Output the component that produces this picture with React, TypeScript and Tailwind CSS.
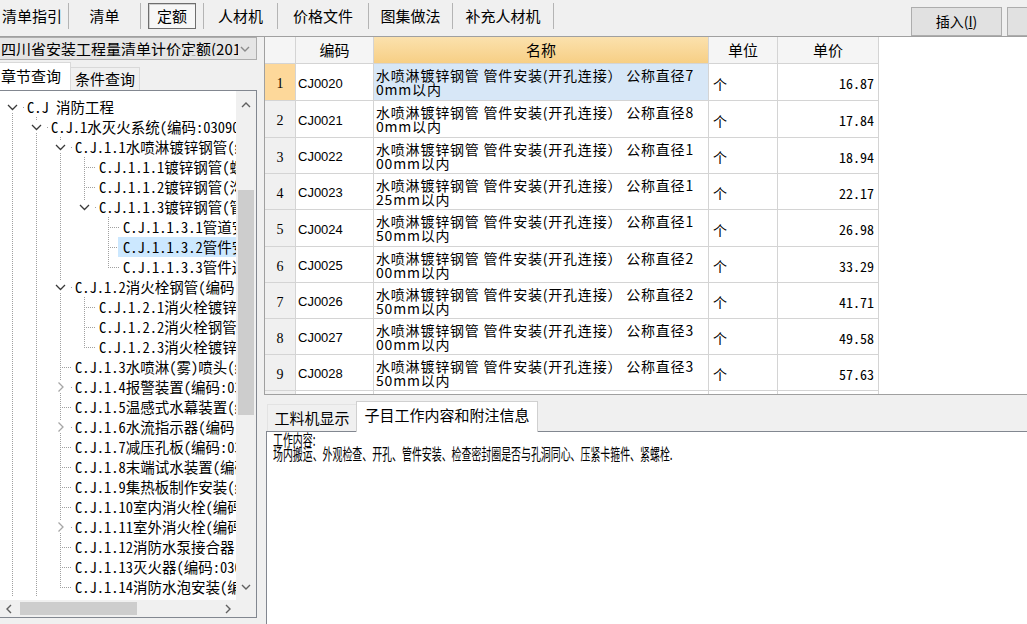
import React from "react";

const MONO = "font-['Noto_Sans_Mono_CJK_SC','Noto_Sans_CJK_SC',monospace]";

type TreeRow = { l: number; t: string; k: "o" | "c" | "f"; last?: boolean; g: boolean[]; sel?: boolean };

const G1 = [true];
const G2 = [true, true];
const G3 = [true, true, true];
const G4 = [true, true, true, false];

const tree: TreeRow[] = [
  { l: 0, t: "C.J 消防工程", k: "o", g: [] },
  { l: 1, t: "C.J.1水灭火系统(编码:030901)", k: "o", g: G1 },
  { l: 2, t: "C.J.1.1水喷淋镀锌钢管(编码", k: "o", g: G2 },
  { l: 3, t: "C.J.1.1.1镀锌钢管(螺纹连接)", k: "f", g: G3 },
  { l: 3, t: "C.J.1.1.2镀锌钢管(沟槽连接)", k: "f", g: G3 },
  { l: 3, t: "C.J.1.1.3镀锌钢管(管件)", k: "o", g: G3, last: true },
  { l: 4, t: "C.J.1.1.3.1管道安装", k: "f", g: G4 },
  { l: 4, t: "C.J.1.1.3.2管件安装", k: "f", g: G4, sel: true },
  { l: 4, t: "C.J.1.1.3.3管件连接", k: "f", g: G4, last: true },
  { l: 2, t: "C.J.1.2消火栓钢管(编码", k: "o", g: G2 },
  { l: 3, t: "C.J.1.2.1消火栓镀锌钢管", k: "f", g: G3 },
  { l: 3, t: "C.J.1.2.2消火栓钢管安装", k: "f", g: G3 },
  { l: 3, t: "C.J.1.2.3消火栓镀锌钢管", k: "f", g: G3, last: true },
  { l: 2, t: "C.J.1.3水喷淋(雾)喷头(编码", k: "f", g: G2 },
  { l: 2, t: "C.J.1.4报警装置(编码:030", k: "c", g: G2 },
  { l: 2, t: "C.J.1.5温感式水幕装置(编", k: "f", g: G2 },
  { l: 2, t: "C.J.1.6水流指示器(编码:", k: "c", g: G2 },
  { l: 2, t: "C.J.1.7减压孔板(编码:030", k: "f", g: G2 },
  { l: 2, t: "C.J.1.8末端试水装置(编码", k: "f", g: G2 },
  { l: 2, t: "C.J.1.9集热板制作安装(编", k: "f", g: G2 },
  { l: 2, t: "C.J.1.10室内消火栓(编码", k: "f", g: G2 },
  { l: 2, t: "C.J.1.11室外消火栓(编码", k: "c", g: G2 },
  { l: 2, t: "C.J.1.12消防水泵接合器(编", k: "f", g: G2 },
  { l: 2, t: "C.J.1.13灭火器(编码:030", k: "f", g: G2 },
  { l: 2, t: "C.J.1.14消防水泡安装(编", k: "f", g: G2, last: true },
];

function TreeLines({ r }: { r: TreeRow }) {
  const w = 24 * (r.l + 1);
  const cx = r.l * 24 + 12.5;
  const dot = { stroke: "#a0a0a0", strokeWidth: 1, strokeDasharray: "1 1", shapeRendering: "crispEdges" as const };
  return (
    <svg width={w} height={20} className="shrink-0">
      {r.g.map((g, a) => (g ? <line key={a} x1={a * 24 + 12.5} x2={a * 24 + 12.5} y1={0} y2={20} {...dot} /> : null))}
      {r.k === "f" ? (
        <>
          <line x1={cx} x2={cx} y1={0} y2={r.last ? 11 : 20} {...dot} />
          <line x1={cx + 1} x2={w} y1={10.5} y2={10.5} {...dot} />
        </>
      ) : (
        <>
          {r.l > 0 && <line x1={cx} x2={cx} y1={0} y2={4} {...dot} />}
          {!r.last && <line x1={cx} x2={cx} y1={16} y2={20} {...dot} />}
          <line x1={cx + 10} x2={w} y1={10.5} y2={10.5} {...dot} />
          {r.k === "o" ? (
            <path d={`M${cx - 4.5} 8 L${cx} 12.5 L${cx + 4.5} 8`} fill="none" stroke="#3a3a3a" strokeWidth={1.3} />
          ) : (
            <path d={`M${cx - 2} 5.5 L${cx + 2.5} 10 L${cx - 2} 14.5`} fill="none" stroke="#a6a6a6" strokeWidth={1.3} />
          )}
        </>
      )}
    </svg>
  );
}

function Chevron({ dir, color = "#606060" }: { dir: "up" | "down" | "left" | "right"; color?: string }) {
  const d =
    dir === "up"
      ? "M1 6 L5 2 L9 6"
      : dir === "down"
      ? "M1 2 L5 6 L9 2"
      : dir === "left"
      ? "M6 1 L2 5 L6 9"
      : "M2 1 L6 5 L2 9";
  const w = dir === "up" || dir === "down" ? 10 : 8;
  const h = dir === "up" || dir === "down" ? 8 : 10;
  return (
    <svg width={w} height={h} viewBox={`0 0 ${w} ${h}`}>
      <path d={d} fill="none" stroke={color} strokeWidth={1.4} />
    </svg>
  );
}

function Sep() {
  return <div className="w-px h-[26px] bg-[#b4b4b4] self-center" />;
}

function Toolbar() {
  return (
    <div className="h-[37px] border-b border-[#a0a0a0] flex items-start text-[15px] shrink-0">
      <div className="flex h-[32px] items-center">
        <div className="w-[68px] pl-[2px]">清单指引</div>
        <Sep />
        <div className="w-[71px] text-center">清单</div>
        <Sep />
        <div className="w-[62px] flex justify-center">
          <div className="w-[48px] h-[26px] border border-[#6e6e6e] bg-[#f7f7f7] shadow-[inset_1px_1px_0_#d0d0d0] flex items-center justify-center">
            定额
          </div>
        </div>
        <Sep />
        <div className="w-[73px] text-center">人材机</div>
        <Sep />
        <div className="w-[90px] text-center">价格文件</div>
        <Sep />
        <div className="w-[83px] text-center">图集做法</div>
        <Sep />
        <div className="w-[100px] text-center">补充人材机</div>
        <Sep />
      </div>
      <div className="flex-1" />
      <div className="mt-[7px] w-[91px] h-[29px] border border-[#adadad] bg-[#e1e1e1] flex items-center justify-center text-[14px]">
        插入(<span className="underline">I</span>)
      </div>
      <div className="ml-[5px] mt-[7px] w-[20px] h-[29px] border border-r-0 border-[#adadad] bg-[#e1e1e1]" />
    </div>
  );
}

function LeftPanel() {
  return (
    <div className="w-[257px] flex flex-col shrink-0">
      <div className="h-[23px] border-y border-r border-[#adadad] bg-[#e5e5e5] flex items-center text-[15px]">
        <div className="flex-1 whitespace-nowrap overflow-hidden pl-px leading-none">四川省安装工程量清单计价定额(201</div>
        <div className="w-[18px] flex justify-center pr-[4px]">
          <Chevron dir="down" color="#8a8a8a" />
        </div>
      </div>
      <div className="h-[30px] flex items-end text-[15px]">
        <div className="w-[71px] h-[28px] bg-white border-r border-t border-[#d9d9d9] flex items-center pl-px">章节查询</div>
        <div className="w-[69px] h-[23px] bg-[#f0f0f0] border-t border-r border-[#d9d9d9] flex items-center justify-center">条件查询</div>
      </div>
      <div className="flex-1 min-h-0 mb-[6px] border-t border-r border-b border-[#828790] bg-white flex flex-col">
        <div className="flex flex-1 min-h-0">
          <div className={`flex-1 min-w-0 overflow-hidden pt-[6px] text-[14.5px] ${MONO}`}>
            {tree.map((r, i) => (
              <div key={i} className="flex h-5 items-center whitespace-nowrap leading-5">
                <TreeLines r={r} />
                {r.sel ? (
                  <span className="ml-[-2px] pl-[5px] bg-[#cce8ff]">{r.t}</span>
                ) : (
                  <span className="ml-[3px]">{r.t}</span>
                )}
              </div>
            ))}
          </div>
          <div className="w-[20px] bg-[#f0f0f0] flex flex-col">
            <div className="h-[26px] flex items-center justify-center pt-[2px]">
              <Chevron dir="up" />
            </div>
            <div className="h-[73px]" />
            <div className="h-[225px] mx-[2px] bg-[#cdcdcd]" />
            <div className="flex-1" />
            <div className="h-[26px] flex items-center justify-center">
              <Chevron dir="down" />
            </div>
          </div>
        </div>
        <div className="h-[17px] flex bg-[#f0f0f0] shrink-0">
          <div className="w-[17px] flex items-center justify-center">
            <Chevron dir="left" />
          </div>
          <div className="ml-[3px] my-[2px] w-[117px] bg-[#cdcdcd]" />
          <div className="flex-1" />
          <div className="w-[17px] flex items-center justify-center">
            <Chevron dir="right" />
          </div>
          <div className="w-[20px]" />
        </div>
      </div>
    </div>
  );
}

const rows = [
  { n: 1, code: "CJ0020", a: "7", b: "0mm以内", p: "16.87", h: "h-[37px]" },
  { n: 2, code: "CJ0021", a: "8", b: "0mm以内", p: "17.84", h: "h-[37px]" },
  { n: 3, code: "CJ0022", a: "1", b: "00mm以内", p: "18.94", h: "h-[36px]" },
  { n: 4, code: "CJ0023", a: "1", b: "25mm以内", p: "22.17", h: "h-[36px]" },
  { n: 5, code: "CJ0024", a: "1", b: "50mm以内", p: "26.98", h: "h-[37px]" },
  { n: 6, code: "CJ0025", a: "2", b: "00mm以内", p: "33.29", h: "h-[36px]" },
  { n: 7, code: "CJ0026", a: "2", b: "50mm以内", p: "41.71", h: "h-[36px]" },
  { n: 8, code: "CJ0027", a: "3", b: "00mm以内", p: "49.58", h: "h-[36px]" },
  { n: 9, code: "CJ0028", a: "3", b: "50mm以内", p: "57.63", h: "h-[36px]" },
  { n: 10, code: "CJ0029", a: "4", b: "00mm以内", p: "66.41", h: "h-[36px]" },
];

function Table() {
  return (
    <div className="h-[358px] shrink-0 bg-white border-l border-b border-[#a0a0a0] overflow-hidden">
      <div className="grid grid-cols-[31px_78px_335px_69px_101px] h-[27px] text-[15px] w-max">
        <div className="border-r border-b border-[#d4d4d4] bg-[#f5f5f5]" />
        <div className="border-r border-b border-[#d4d4d4] bg-[#f5f5f5] flex items-center justify-center">编码</div>
        <div className="border-r border-b border-[#d4d4d4] bg-gradient-to-b from-[#fbe1ad] to-[#f7cf85] flex items-center justify-center">名称</div>
        <div className="border-r border-b border-[#d4d4d4] bg-[#f5f5f5] flex items-center justify-center">单位</div>
        <div className="border-r border-b border-[#d4d4d4] bg-[#f5f5f5] flex items-center justify-center">单价</div>
      </div>
      {rows.map((r) => (
        <div key={r.n} className={`grid grid-cols-[31px_78px_335px_69px_101px] w-max ${r.h}`}>
          <div
            className={`border-r border-b border-[#d4d4d4] flex items-center justify-center pt-[3px] text-[14px] font-['Liberation_Serif',serif] ${
              r.n === 1 ? "bg-[#fdd89a]" : "bg-[#f0f0f0]"
            }`}
          >
            {r.n}
          </div>
          <div className="border-r border-b border-[#d4d4d4] flex items-center pl-[2px] pt-[3px] text-[13px] font-['Liberation_Sans',sans-serif]">
            {r.code}
          </div>
          <div
            className={`border-r border-b border-[#d4d4d4] flex flex-col justify-center pl-[2px] overflow-hidden text-[14px] leading-[14px] tracking-[0.8px] ${
              r.n === 1 ? "bg-[#d7e7f7]" : ""
            }`}
          >
            <div className="whitespace-nowrap">水喷淋镀锌钢管 管件安装(开孔连接） 公称直径{r.a}</div>
            <div className="whitespace-nowrap">{r.b}</div>
          </div>
          <div className="border-r border-b border-[#d4d4d4] flex items-center pl-[4px] pt-[4px] text-[14px]">个</div>
          <div className={`border-r border-b border-[#d4d4d4] flex items-center justify-end pr-[4px] pt-[3px] text-[14px] ${MONO}`}>
            {r.p}
          </div>
        </div>
      ))}
    </div>
  );
}

function RightPanel() {
  return (
    <div className="flex-1 min-w-0 flex flex-col">
      <Table />
      <div className="h-[36px] shrink-0 flex items-end pl-[3px] text-[15px]">
        <div className="w-[89px] h-[27px] flex items-center justify-center border-t border-l border-[#e3e3e3]">工料机显示</div>
        <div className="relative z-10 mb-[-1px] w-[182px] h-[31px] bg-white border-t border-l border-r border-[#d0d0d0] flex items-center justify-center pb-[3px]">
          子目工作内容和附注信息
        </div>
      </div>
      <div className="flex-1 ml-[2px] bg-white border-t border-l border-[#828790] overflow-hidden pl-[6px]">
        <div className="origin-left scale-x-[0.62] text-[16px] leading-[14px] whitespace-nowrap">
          <div>工作内容:</div>
          <div>场内搬运、外观检查、开孔、管件安装、检查密封圈是否与孔洞同心、压紧卡箍件、紧螺栓.</div>
        </div>
      </div>
    </div>
  );
}

export default function App() {
  return (
    <div className="w-[1027px] h-[624px] overflow-hidden bg-[#f0f0f0] flex flex-col text-black font-['Noto_Sans_CJK_SC','Noto_Sans_CJK_JP',sans-serif]">
      <Toolbar />
      <div className="flex flex-1 min-h-0">
        <LeftPanel />
        <div className="w-[7px] shrink-0" />
        <RightPanel />
      </div>
    </div>
  );
}
